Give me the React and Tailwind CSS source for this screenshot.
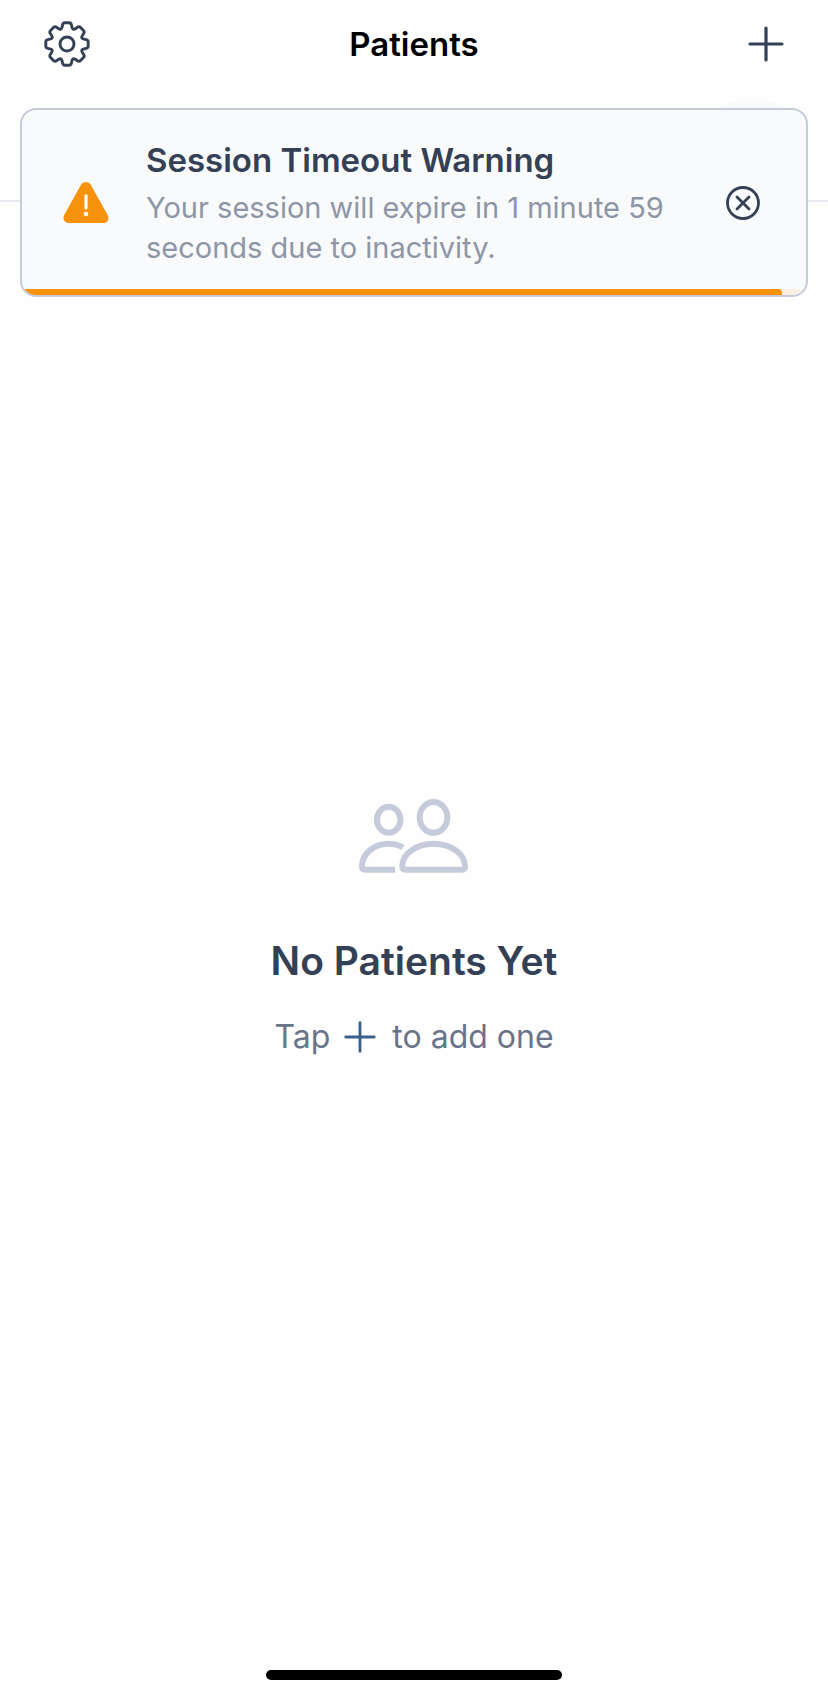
import React, { useState } from "react";

// rounded outline of an eight-tooth gear around 0,0
const gearPath = (() => {
  const corners = [];
  for (let i = 0; i < 8; i++) {
    const a = (i * Math.PI) / 4;
    [[-5.2, 15.2], [-4, 21.2], [4, 21.2], [5.2, 15.2]].forEach(([x, y]) => {
      corners.push([
        x * Math.cos(a) + y * Math.sin(a),
        x * Math.sin(a) - y * Math.cos(a),
      ]);
    });
  }
  const radius = 2;
  return (
    corners
      .map((p, i) => {
        const prev = corners[(i + corners.length - 1) % corners.length];
        const next = corners[(i + 1) % corners.length];
        const towards = (q) => {
          const len = Math.hypot(q[0] - p[0], q[1] - p[1]);
          const t = Math.min(radius / len, 0.5);
          return `${p[0] + (q[0] - p[0]) * t} ${p[1] + (q[1] - p[1]) * t}`;
        };
        return `${i ? "L" : "M"}${towards(prev)}Q${p[0]} ${p[1]} ${towards(next)}`;
      })
      .join("") + "Z"
  );
})();

const GearIcon = () => (
  <svg width="46" height="46" viewBox="-23 -23 46 46" fill="none" stroke="currentColor" strokeWidth="2.9" strokeLinejoin="round">
    <path d={gearPath} />
    <circle r="7" />
  </svg>
);

const PlusIcon = ({ size, className }) => (
  <svg width={size} height={size} viewBox="0 0 36 36" fill="none" stroke="currentColor" strokeWidth="3.2" strokeLinecap="round" className={className}>
    <path d="M18 2v32M2 18h32" />
  </svg>
);

const WarningIcon = () => (
  <svg width="46" height="42" viewBox="0 0 46 42" className="shrink-0">
    <path
      d="M18 2.8C20 -.9 25.600 -.9 27.700 2.8L44.700 33C46.700 36.800 44.500 41 40.500 41H5.500C1.500 41 -.7 36.800 1.200 33Z"
      fill="#f8920c"
    />
    <path d="M23 13.800V26" stroke="#fff" strokeWidth="3.200" strokeLinecap="round" />
    <circle cx="23" cy="32" r="2.300" fill="#fff" />
  </svg>
);

const CloseIcon = () => (
  <svg width="34" height="34" viewBox="0 0 34 34" fill="none" stroke="currentColor" strokeWidth="2.8" strokeLinecap="round">
    <circle cx="17" cy="17" r="15.5" />
    <path d="M11 11l12 12M23 11L11 23" />
  </svg>
);

const PeopleIcon = () => (
  <svg width="110" height="74" viewBox="0 0 110 74" fill="none" stroke="#c5cbda" strokeWidth="6">
    <ellipse cx="29.7" cy="20.7" rx="11.7" ry="13" />
    <ellipse cx="74.5" cy="18.4" rx="13.8" ry="15.4" />
    <path d="M36 70.7H6Q3 70.7 3 67.2C3 55 15 44.7 29.5 44.7C35 44.7 40 46 43.8 48.5" />
    <path d="M46.5 70.7H102.8Q106 70.7 106 67.2C106 55 92 44.7 74.6 44.7S43.3 55 43.3 67.2Q43.3 70.7 46.5 70.7Z" />
  </svg>
);

const SessionToast = ({ onClose }) => (
  <div
    role="alert"
    className="absolute inset-x-5 top-[108px] overflow-hidden rounded-2xl border-2 border-[#c5cbda] bg-[#f9fafc]"
  >
    <div className="flex items-center pt-7 pr-[46px] pb-[21px] pl-[41px]">
      <WarningIcon />
      <div className="ml-[37px] flex-1">
        <h2 className="text-[33px] leading-[44px] font-semibold">Session Timeout Warning</h2>
        <p className="mt-[6px] text-[29px] leading-[40px] text-[#8d96a6]">
          Your session will expire in 1 minute 59 seconds due to inactivity.
        </p>
      </div>
      <button type="button" aria-label="Dismiss" className="ml-10" onClick={onClose}>
        <CloseIcon />
      </button>
    </div>
    <div className="h-[6px] bg-[#fbefe1]">
      <div className="h-full w-[97%] rounded-tr bg-[#f8920c]" />
    </div>
  </div>
);

const App = () => {
  const [showToast, setShowToast] = useState(true);

  return (
    <div className="relative flex min-h-screen flex-col bg-[#fefefe] font-['Inter',sans-serif] text-[#344055]">
      <header className="border-b-2 border-[#e9eaf0]">
        <div className="grid grid-cols-3 items-center px-11 pt-[21px]">
          <button type="button" aria-label="Settings" className="justify-self-start">
            <GearIcon />
          </button>
          <h1 className="text-center text-[33px] leading-[46px] font-semibold text-black">Patients</h1>
          <button type="button" aria-label="Add patient" className="justify-self-end">
            <PlusIcon size={36} />
          </button>
        </div>
        <div className="flex justify-end px-[26px] pt-[33px] pb-4">
          <div className="h-[84px] w-[100px] rounded-full bg-[#f9fafc]" />
        </div>
      </header>

      {showToast && <SessionToast onClose={() => setShowToast(false)} />}

      <main className="flex flex-1 flex-col items-center justify-center pb-3">
        <PeopleIcon />
        <h2 className="mt-16 text-[39px] leading-[48px] font-semibold">No Patients Yet</h2>
        <p className="mt-7 flex items-center text-[32px] leading-[48px] text-[#69738a]">
          Tap
          <PlusIcon size={32} className="mr-4 ml-[14px] text-[#3c5f8c]" />
          to add one
        </p>
      </main>

      <div className="mx-auto mb-4 h-[10px] w-[296px] rounded-full bg-black" />
    </div>
  );
};

export default App;
